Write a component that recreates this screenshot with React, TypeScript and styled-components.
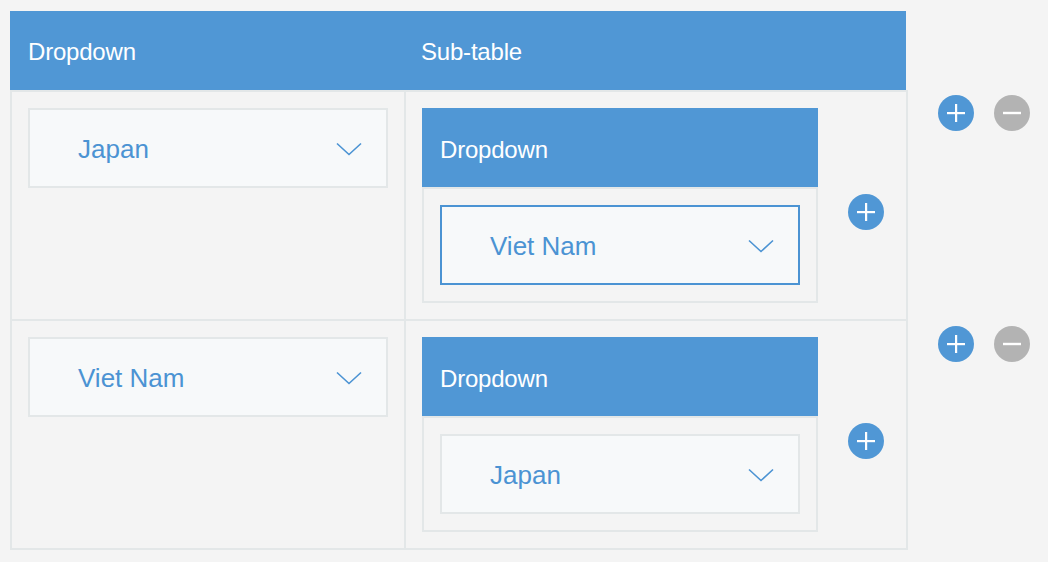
import React from "react";
import styled, { createGlobalStyle } from "styled-components";

const GlobalStyle = createGlobalStyle`
  html, body {
    margin: 0;
    padding: 0;
    background: #f4f4f4;
    font-family: "Liberation Sans", Arial, sans-serif;
  }
`;

const BLUE = "#5097d5";
const TEXT_BLUE = "#4b93d3";
const LINE = "#e3e7e8";

const Page = styled.div`
  padding: 11px 0 0 10px;
  display: flex;
  flex-direction: column;
`;

const HeaderBar = styled.div`
  display: flex;
  width: 896px;
  height: 79px;
  background: ${BLUE};
`;

const HeaderCell = styled.div<{ $width?: number }>`
  ${(p) => (p.$width ? `width: ${p.$width}px;` : "flex: 1;")}
  display: flex;
  align-items: center;
  padding: 2px 0 0 18px;
  box-sizing: border-box;
  color: #fff;
  font-size: 24px;
  letter-spacing: -0.2px;
`;

const RowLine = styled.div`
  display: flex;
  align-items: flex-start;
`;

const Row = styled.div<{ $first?: boolean }>`
  display: flex;
  width: 898px;
  box-sizing: border-box;
  border: 2px solid ${LINE};
  border-top-width: ${(p) => (p.$first ? "2px" : "0")};
`;

const LeftCell = styled.div`
  width: 394px;
  box-sizing: border-box;
  border-right: 2px solid ${LINE};
  padding: 16px;
`;

const RightCell = styled.div`
  flex: 1;
  display: flex;
  align-items: flex-start;
  padding: 16px;
`;

const SubTable = styled.div`
  width: 396px;
  display: flex;
  flex-direction: column;
`;

const SubHeader = styled.div`
  height: 79px;
  box-sizing: border-box;
  background: ${BLUE};
  color: #fff;
  font-size: 24px;
  letter-spacing: -0.2px;
  display: flex;
  align-items: center;
  padding: 4px 0 0 18px;
`;

const SubBody = styled.div`
  border: 2px solid ${LINE};
  padding: 16px;
`;

const Select = styled.div<{ $focused?: boolean }>`
  width: 360px;
  height: 80px;
  box-sizing: border-box;
  border: 2px solid ${(p) => (p.$focused ? TEXT_BLUE : LINE)};
  background: #f7f9fa;
  display: flex;
  align-items: center;
  padding: 2px 24px 0 48px;
  color: ${TEXT_BLUE};
  font-size: 26px;
`;

const SelectLabel = styled.span`
  flex: 1;
`;

const Chevron = () => (
  <svg width="26" height="14" viewBox="0 0 26 14" fill="none">
    <polyline points="1,1.5 13,12.5 25,1.5" stroke={TEXT_BLUE} strokeWidth="1.6" />
  </svg>
);

const CircleButton = styled.button<{ $gray?: boolean }>`
  width: 36px;
  height: 36px;
  border-radius: 50%;
  border: none;
  padding: 0;
  background: ${(p) => (p.$gray ? "#b3b3b3" : BLUE)};
  display: flex;
  align-items: center;
  justify-content: center;
  flex-shrink: 0;
`;

const SubAdd = styled(CircleButton)`
  margin: 86px 0 0 30px;
`;

const RowActions = styled.div`
  display: flex;
  gap: 20px;
  margin: 5px 0 0 30px;
`;

const PlusIcon = () => (
  <svg width="18" height="18" viewBox="0 0 18 18">
    <rect x="0" y="8" width="18" height="2.2" fill="#fff" />
    <rect x="8" y="0" width="2.2" height="18" fill="#fff" />
  </svg>
);

const MinusIcon = () => (
  <svg width="18" height="18" viewBox="0 0 18 18">
    <rect x="0" y="7.8" width="18" height="2.4" fill="#fff" />
  </svg>
);

const Dropdown = ({ value, focused }: { value: string; focused?: boolean }) => (
  <Select $focused={focused}>
    <SelectLabel>{value}</SelectLabel>
    <Chevron />
  </Select>
);

const rows = [
  { main: "Japan", sub: "Viet Nam", focused: true },
  { main: "Viet Nam", sub: "Japan", focused: false },
];

export default function App() {
  return (
    <>
      <GlobalStyle />
      <Page>
        <HeaderBar>
          <HeaderCell $width={393}>Dropdown</HeaderCell>
          <HeaderCell>Sub-table</HeaderCell>
        </HeaderBar>
        {rows.map((r, i) => (
          <RowLine key={i}>
            <Row $first={i === 0}>
              <LeftCell>
                <Dropdown value={r.main} />
              </LeftCell>
              <RightCell>
                <SubTable>
                  <SubHeader>Dropdown</SubHeader>
                  <SubBody>
                    <Dropdown value={r.sub} focused={r.focused} />
                  </SubBody>
                </SubTable>
                <SubAdd>
                  <PlusIcon />
                </SubAdd>
              </RightCell>
            </Row>
            <RowActions>
              <CircleButton>
                <PlusIcon />
              </CircleButton>
              <CircleButton $gray>
                <MinusIcon />
              </CircleButton>
            </RowActions>
          </RowLine>
        ))}
      </Page>
    </>
  );
}
